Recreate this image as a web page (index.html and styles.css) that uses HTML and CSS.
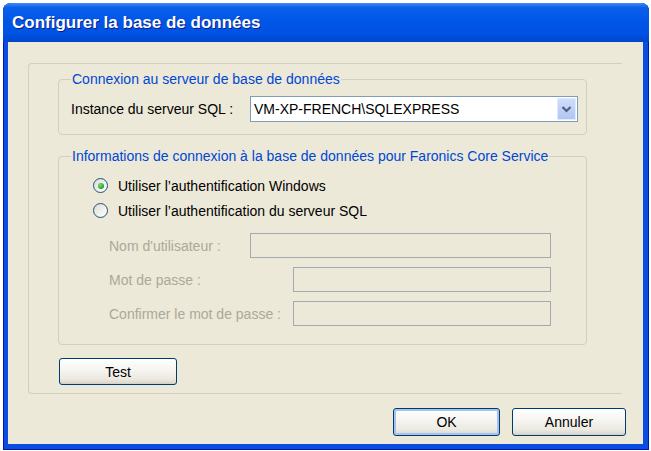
FILE: index.html
```html
<!DOCTYPE html>
<html lang="fr">
<head>
    <meta charset="UTF-8">
    <meta name="viewport" content="width=device-width, initial-scale=1.0">
    <title>Configurer la base de données</title>
    <link rel="stylesheet" href="styles.css">
</head>
<body>
    <div class="window">
        <div class="titlebar">Configurer la base de données</div>
        <div class="client">
            <div class="panel">
                <!-- Serveur SQL -->
                <fieldset class="group group-server">
                    <legend>Connexion au serveur de base de données</legend>
                    <div class="server-row">
                        <label>Instance du serveur SQL :</label>
                        <div class="combo">
                            <span class="combo-value">VM-XP-FRENCH\SQLEXPRESS</span>
                            <span class="combo-btn">
                                <svg width="19" height="22" viewBox="0 0 19 22">
                                    <path d="M5.5 9 L9.5 13 L13.5 9" fill="none" stroke="#4d6185" stroke-width="2.2"/>
                                </svg>
                            </span>
                        </div>
                    </div>
                </fieldset>
                <!-- Authentification -->
                <fieldset class="group group-auth">
                    <legend>Informations de connexion à la base de données pour Faronics Core Service</legend>
                    <div class="radio-row"><span class="radio checked"></span>Utiliser l’authentification Windows</div>
                    <div class="radio-row"><span class="radio"></span>Utiliser l’authentification du serveur SQL</div>
                    <div class="fields">
                        <div class="field-row"><span>Nom d'utilisateur :</span><span class="field wide"></span></div>
                        <div class="field-row"><span>Mot de passe :</span><span class="field"></span></div>
                        <div class="field-row"><span>Confirmer le mot de passe :</span><span class="field"></span></div>
                    </div>
                </fieldset>
                <button class="btn btn-test">Test</button>
            </div>
            <div class="actions">
                <button class="btn btn-ok">OK</button>
                <button class="btn btn-cancel">Annuler</button>
            </div>
        </div>
    </div>
</body>
</html>
```

FILE: styles.css
```css
body {
    margin: 0;
    background-color: #fff;
    font-family: 'Liberation Sans', Arial, sans-serif;
    font-size: 14px;
    color: #000;
}
.window {
    width: 646px;
    height: 447px;
    margin: 3px 0 0 3px;
    display: flex;
    flex-direction: column;
    background-color: #0a4de0;
    border-radius: 8px 8px 0 0;
    box-shadow: inset 1px 0 #0019a8, inset -1px 0 #0019a8, inset 0 -1px #0019a8;
}
.titlebar {
    height: 39px;
    flex-shrink: 0;
    padding-left: 9px;
    display: flex;
    align-items: center;
    border-radius: 8px 8px 0 0;
    background: linear-gradient(to bottom, #3d8ef7 0%, #0a5fea 12%, #0056e8 45%, #0052e2 80%, #0044cc 100%);
    color: #fff;
    font-size: 17px;
    font-weight: bold;
    text-shadow: 1px 1px #0a1d8a;
}
.client {
    flex: 1;
    margin: 0 6px 6px 5px;
    background-color: #ece9d8;
}
.panel {
    width: 594px;
    height: 331px;
    box-sizing: border-box;
    margin: 21px 0 0 20px;
    padding: 7px 0 8px 29px;
    display: flex;
    flex-direction: column;
    align-items: flex-start;
    border: 1px solid #d0d0bf;
    border-right: none;
    border-radius: 4px 0 0 4px;
}
.group {
    width: 529px;
    box-sizing: border-box;
    flex-shrink: 0;
    margin: 0;
    border: 1px solid #d0d0bf;
    border-radius: 4px;
    padding: 9px 8px 12px 12px;
}
.group legend {
    padding: 0 1px;
    line-height: 16px;
    white-space: nowrap;
    color: #0046d5;
}
.group-auth {
    margin-top: 13px;
    padding-bottom: 18px;
}
.server-row {
    display: flex;
    align-items: center;
}
.combo {
    width: 328px;
    height: 26px;
    box-sizing: border-box;
    margin-left: auto;
    display: flex;
    align-items: center;
    background-color: #fff;
    border: 1px solid #7f9db9;
}
.combo-value {
    padding-left: 3px;
}
.combo-btn {
    width: 19px;
    height: 22px;
    margin-left: auto;
    margin-right: 1px;
    border-radius: 2px;
    background: linear-gradient(to bottom, #d3dffb 0%, #bccdf6 60%, #b0c4f2 100%);
    box-shadow: inset 0 0 0 1px #e1e9fc;
}
.combo-btn svg {
    display: block;
}
.radio-row {
    height: 25px;
    padding-left: 22px;
    display: flex;
    align-items: center;
}
.radio {
    width: 15px;
    height: 15px;
    box-sizing: border-box;
    margin-right: 10px;
    border: 1px solid #1c5180;
    border-radius: 50%;
    background: linear-gradient(135deg, #dcdcd5 0%, #f2f2ee 60%, #fff 100%);
    display: flex;
    align-items: center;
    justify-content: center;
}
.radio.checked::after {
    content: "";
    width: 6px;
    height: 6px;
    border-radius: 50%;
    background: radial-gradient(circle at 35% 35%, #7ae07a 0%, #21a121 70%);
}
.fields {
    margin-top: 10px;
    display: flex;
    flex-direction: column;
    gap: 9px;
}
.field-row {
    height: 25px;
    padding: 0 27px 0 38px;
    display: flex;
    align-items: center;
    justify-content: space-between;
    white-space: nowrap;
    color: #aca899;
}
.field {
    width: 258px;
    height: 25px;
    box-sizing: border-box;
    border: 1px solid #a2a9b1;
    background-color: #ece9d8;
}
.field.wide {
    width: 301px;
}
.btn {
    height: 28px;
    flex-shrink: 0;
    padding: 0;
    font-family: 'Liberation Sans', Arial, sans-serif;
    font-size: 14px;
    color: #000;
    border: 1px solid #003c74;
    border-radius: 3px;
    background: linear-gradient(to bottom, #ffffff 0%, #f5f4f0 45%, #ebe9e0 80%, #d8d3c8 100%);
    box-shadow: inset 0 -1px #d6d0c5;
}
.btn-test {
    width: 118px;
    height: 27px;
    margin: 13px 0 0 1px;
}
.actions {
    margin-top: 14px;
    padding-right: 17px;
    display: flex;
    justify-content: flex-end;
    gap: 12px;
}
.btn-ok {
    width: 107px;
    box-shadow: inset 0 0 0 2px #a8c2f0, inset 0 -1px #d6d0c5;
}
.btn-cancel {
    width: 114px;
}
```
